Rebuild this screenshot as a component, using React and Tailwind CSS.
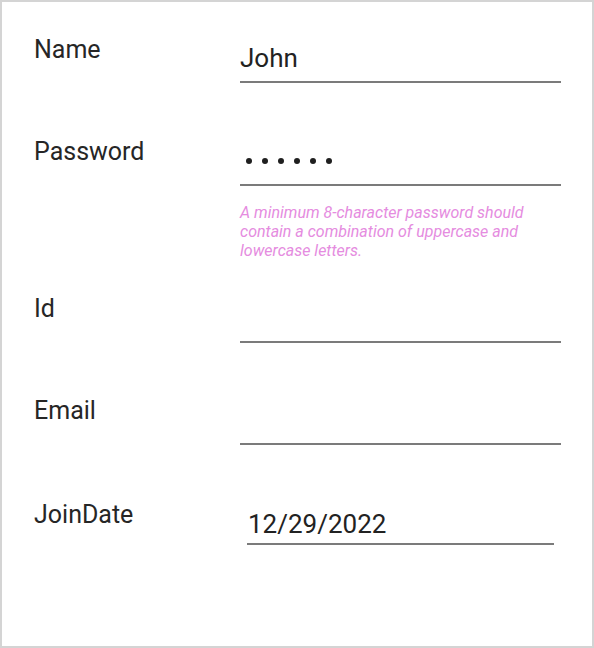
const fontStyle = { fontFamily: "Roboto, 'Liberation Sans', sans-serif" };

const Field = ({ label, value, className = "", inputClass = "mt-[9px] h-[40px] pb-[8px]", children }) => (
    <div className={"flex items-start " + className}>
        <div className="w-[206px] shrink-0 text-[25px] leading-[30px] text-[#262626]">{label}</div>
        <div className="flex-1 flex flex-col">
            <div className={"border-b-2 border-[#7b7b7b] text-[26px] leading-[30px] text-[#222222] " + inputClass}>
                {value}
            </div>
            {children}
        </div>
    </div>
);

// masked password drawn as dots
const Dots = ({ count }) => (
    <div className="h-[30px] flex items-center gap-[10px] pl-[6px]">
        {Array.from({ length: count }).map((_, i) => (
            <span key={i} className="w-[6px] h-[6px] rounded-full bg-[#1f1f1f]" />
        ))}
    </div>
);

export default function App() {
    return (
        <div style={fontStyle} className="w-[594px] h-[648px] border-2 border-[#d4d4d4] bg-white pl-[32px] pr-[31px] pt-[33px]">
            <Field label="Name" value="John" inputClass="mt-[8px] h-[40px] pb-[8px]" />

            <Field label="Password" className="mt-[54px]" value={<Dots count={6} />}>
                <p className="mt-[17px] text-[16px] leading-[19px] italic text-[#e58ce0]">
                    A minimum 8-character password should contain a combination of uppercase and lowercase letters.
                </p>
            </Field>

            <Field label="Id" value="" className="mt-[34px]" />

            <Field label="Email" value="" className="mt-[53px]" />

            <Field
                label="JoinDate"
                className="mt-[55px]"
                value="12/29/2022"
                inputClass="mt-[9px] mx-[7px] h-[36px] pb-[4px] pl-[1px]"
            />
        </div>
    );
}
